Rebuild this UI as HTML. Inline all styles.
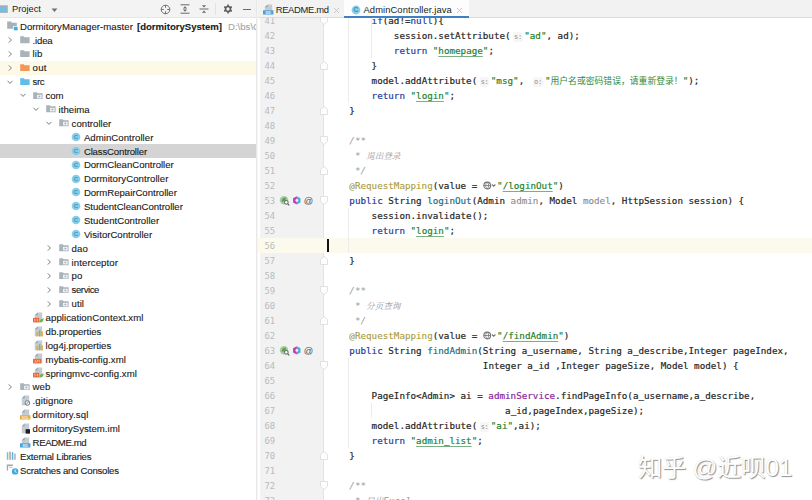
<!DOCTYPE html>
<html lang="zh"><head><meta charset="utf-8"><title>AdminController.java</title>
<style>
*{box-sizing:border-box}
html,body{margin:0;padding:0}
body{width:812px;height:500px;overflow:hidden;background:#fff;position:relative;font-family:"Liberation Sans","Noto Sans CJK SC",sans-serif;color:#1c1c1c}
#left{position:absolute;left:0;top:0;width:256px;height:500px;background:#fff;overflow:hidden}
#lhead{position:absolute;left:0;top:0;width:256px;height:18px;background:#f3f3f3;border-bottom:1px solid #e6e6e6}
#lhead .t{position:absolute;left:12px;top:0.8px;line-height:17.5px;font-size:9.3px;color:#1c1c1c}
.row{position:absolute;left:0;width:256px;height:13.875px;white-space:nowrap}
.row .lbl{position:absolute;top:0.7px;line-height:13.875px;font-size:9.6px;color:#1a1a1a;letter-spacing:0;-webkit-text-stroke:0.12px}
.row .bd{font-weight:bold}
.row .path{color:#a6a6a6}
.row .icw{position:absolute;top:0;height:13.875px;display:flex;align-items:center}
.row .ar{position:absolute;top:3px}
.ic{display:block}
#split{position:absolute;left:255.5px;top:0;width:4px;height:500px;background:#f6f6f6;border-left:1px solid #e8e8e8}
#ed{position:absolute;left:258px;top:0;width:554px;height:500px;background:#fff;overflow:hidden}
#gut{position:absolute;left:259.5px;top:18px;width:64px;height:482px;background:#f2f2f2;border-right:1px solid #e3e3e3}
#cur{position:absolute;left:258px;top:237.5px;width:554px;height:15px;background:#fcfaed}
#caret{position:absolute;left:327.2px;top:239px;width:1.7px;height:13.3px;background:#111}
#tabs{position:absolute;left:258px;top:0;width:554px;height:18px;background:#f2f2f2;border-bottom:1px solid #dcdcdc}
.tab{position:absolute;top:0;height:18px;line-height:17.5px;font-size:9.4px;color:#1c1c1c;white-space:nowrap}
.tl{position:absolute;top:1px}
.tx{position:absolute;top:6.5px}
.tab.act{background:#fdfdfd;border-bottom:2.2px solid #3f7fc4}
.ln{position:absolute;left:258px;width:17.2px;text-align:right;height:15.0px;line-height:15.0px;font-family:"DejaVu Sans Mono","Liberation Mono",monospace;font-size:8.9px;color:#bababa}
.cl{position:absolute;height:15.0px;line-height:15.0px;font-family:"DejaVu Sans Mono","Liberation Mono","Noto Sans CJK SC",monospace;font-size:9.240px;color:#242424;white-space:pre;-webkit-text-stroke:0.18px}
.k{color:#1b3a9f} .s{color:#1f7f2c} .u{text-decoration:underline;text-decoration-thickness:0.7px;text-underline-offset:1.5px;text-decoration-color:rgba(31,127,44,.6)} .m{color:#1a6c82} .a{color:#a89a3c;-webkit-text-stroke:0.1px} .f{color:#8a259a}
.c{color:#999;font-style:italic;-webkit-text-stroke:0} .p{color:#8a8a8a;-webkit-text-stroke:0.1px}
.cj{font-size:8.82px;-webkit-text-stroke:0;color:#2f8a3c}
.c.cj{color:#999;font-family:"Noto Serif CJK SC","Noto Sans CJK SC",serif;font-size:8.6px}
.h{-webkit-text-stroke:0;display:inline-block;font-family:"DejaVu Sans Mono","Liberation Mono",monospace;font-size:7px;color:#8c8c8c;background:#f6f6f6;border-radius:2px;padding:0;margin:0 1.5px 0 2.7px;line-height:10px;height:10px;width:9.4px;text-align:center;vertical-align:0.5px;letter-spacing:-0.3px}
.h2{margin-left:2.8px;width:10.9px}
.gl{display:inline-block;width:14.3px;height:9px;vertical-align:-1px}
.ig{position:absolute;width:1px;background:#ececec}
.fold{position:absolute;left:319.700px}
.gi{position:absolute;left:278.5px;height:11px;white-space:nowrap}
.gi svg{vertical-align:top}
.gi .at{position:absolute;left:25.3px;top:0.3px;font-size:9.3px;color:#4f4f4f;line-height:13px;font-family:"Liberation Sans",sans-serif}
#wm{position:absolute;left:638px;top:452px;font-size:24.3px;line-height:32px;color:#fff;white-space:nowrap;font-family:"Liberation Sans","Noto Sans CJK SC",sans-serif;text-shadow:1px 1px 0.9px rgba(60,60,60,.55),0 0 1px rgba(120,120,120,.3);letter-spacing:-0.2px}
</style></head><body>
<div id="left">
<div id="lhead">
<svg style="position:absolute;left:0;top:5px" width="9" height="9" viewBox="0 0 9 9"><rect x="-1" y="0.3" width="8.8" height="7.6" fill="#a3afb8"/><rect x="-1" y="2.6" width="7.6" height="4.4" fill="#6fc0e6"/></svg>
<svg style="position:absolute;left:51.4px;top:7.6px" width="8" height="5" viewBox="0 0 8 5"><path d="M0.6 0.5h5.8l-2.9 3.5z" fill="#6e6e6e"/></svg>
<svg style="position:absolute;left:160.2px;top:4px" width="11" height="11" viewBox="0 0 11 11"><circle cx="5.5" cy="5.5" r="4.3" fill="none" stroke="#6a6a6a" stroke-width="0.95"/><path d="M5.5 1.2v2.6M5.5 7.2v2.6M1.2 5.5h2.6M7.2 5.5h2.6" stroke="#6a6a6a" stroke-width="0.95"/></svg>
<svg style="position:absolute;left:179.6px;top:4.3px" width="10" height="10" viewBox="0 0 10 10"><path d="M0.5 0.8h9M0.5 9.2h9" stroke="#6a6a6a" stroke-width="1"/><path d="M5 2.3l2.100 2.2h-4.2zM5 7.7l2.100-2.2h-4.2z" fill="#6a6a6a"/></svg>
<svg style="position:absolute;left:198.7px;top:4.3px" width="10" height="10" viewBox="0 0 10 10"><path d="M0.5 5h9" stroke="#6a6a6a" stroke-width="1"/><path d="M5 3.6l2.100-2.4h-4.2zM5 6.4l2.100 2.4h-4.2z" fill="#6a6a6a"/></svg>
<div style="position:absolute;left:215.2px;top:3px;width:1px;height:12px;background:#e2e2e2"></div>
<svg style="position:absolute;left:222.9px;top:4.3px" width="10" height="10" viewBox="0 0 10 10"><circle cx="5" cy="5" r="2.5" fill="none" stroke="#5c5c5c" stroke-width="1.7"/><path d="M5 0.6v1.800M5 7.6v1.800M1.200 2.8l1.600 0.900M7.200 6.3l1.600 0.900M1.200 7.2l1.600-0.900M7.200 3.7l1.600-0.9" stroke="#5c5c5c" stroke-width="1.6"/></svg>
<div style="position:absolute;left:242.5px;top:8.9px;width:8.8px;height:1.2px;background:#6a6a6a"></div>
<span class="t">Project</span></div>
<div class="row" style="top:19.06px;"><span class="icw" style="left:7.0px"><svg class="ic" width="12" height="10" viewBox="0 0 12 10"><path d="M0.200 0.6h3.800l1 1.2h4.8v6H0.200z" fill="#a6b1b9"/><rect x="6.4" y="5.4" width="4.6" height="4.4" fill="#3fb0e2" stroke="#fff" stroke-width="0.7"/></svg></span><span class="lbl" style="left:20.0px;letter-spacing:0.040px">DormitoryManager-master</span><span class="lbl bd" style="left:137.0px;letter-spacing:-0.017px">[dormitorySystem]</span><span class="lbl path" style="left:228.0px;letter-spacing:0.000px">D:\bs\C</span></div>
<div class="row" style="top:32.94px;"><svg class="ar" style="left:5.8px" width="8" height="8" viewBox="0 0 8 8"><path d="M2.8 1.4l2.6 2.6-2.6 2.6" stroke="#7c7c7c" stroke-width="1" fill="none"/></svg><span class="icw" style="left:20.2px"><svg class="ic" width="9.8" height="7.5" viewBox="0 0 10 8" preserveAspectRatio="none"><path d="M0.2 0.2h3.6l1 1.2h5v6.4H0.2z" fill="#a9b3ba"/></svg></span><span class="lbl" style="left:32.6px;letter-spacing:-0.183px">.idea</span></div>
<div class="row" style="top:46.81px;"><svg class="ar" style="left:5.8px" width="8" height="8" viewBox="0 0 8 8"><path d="M2.8 1.4l2.6 2.6-2.6 2.6" stroke="#7c7c7c" stroke-width="1" fill="none"/></svg><span class="icw" style="left:20.2px"><svg class="ic" width="9.8" height="7.5" viewBox="0 0 10 8" preserveAspectRatio="none"><path d="M0.2 0.2h3.6l1 1.2h5v6.4H0.2z" fill="#a9b3ba"/></svg></span><span class="lbl" style="left:32.6px;letter-spacing:0.064px">lib</span></div>
<div class="row" style="top:60.69px;background:#fcf9e6;"><svg class="ar" style="left:5.8px" width="8" height="8" viewBox="0 0 8 8"><path d="M2.8 1.4l2.6 2.6-2.6 2.6" stroke="#7c7c7c" stroke-width="1" fill="none"/></svg><span class="icw" style="left:20.2px"><svg class="ic" width="9.8" height="7.5" viewBox="0 0 10 8" preserveAspectRatio="none"><path d="M0.2 0.2h3.6l1 1.2h5v6.4H0.2z" fill="#f2965a"/></svg></span><span class="lbl" style="left:32.6px;letter-spacing:0.285px">out</span></div>
<div class="row" style="top:74.56px;"><svg class="ar" style="left:5.8px" width="8" height="8" viewBox="0 0 8 8"><path d="M1.5 2.8l2.5 2.6 2.5-2.6" stroke="#7c7c7c" stroke-width="1" fill="none"/></svg><span class="icw" style="left:20.2px"><svg class="ic" width="9.8" height="7.5" viewBox="0 0 10 8" preserveAspectRatio="none"><path d="M0.2 0.2h3.6l1 1.2h5v6.4H0.2z" fill="#62bde6"/></svg></span><span class="lbl" style="left:32.6px;letter-spacing:-0.366px">src</span></div>
<div class="row" style="top:88.44px;"><svg class="ar" style="left:18.7px" width="8" height="8" viewBox="0 0 8 8"><path d="M1.5 2.8l2.5 2.6 2.5-2.6" stroke="#7c7c7c" stroke-width="1" fill="none"/></svg><span class="icw" style="left:33.2px"><svg class="ic" width="9.8" height="7.5" viewBox="0 0 10 8" preserveAspectRatio="none"><path d="M0.2 0.2h3.6l1 1.2h5v6.4H0.2z" fill="#a9b3ba"/><rect x="4.2" y="3" width="4.6" height="3.8" fill="#f4f6f7"/><circle cx="6.5" cy="4.9" r="1.05" fill="#a9b3ba"/></svg></span><span class="lbl" style="left:45.6px;letter-spacing:-0.075px">com</span></div>
<div class="row" style="top:102.31px;"><svg class="ar" style="left:31.6px" width="8" height="8" viewBox="0 0 8 8"><path d="M1.5 2.8l2.5 2.6 2.5-2.6" stroke="#7c7c7c" stroke-width="1" fill="none"/></svg><span class="icw" style="left:46.2px"><svg class="ic" width="9.8" height="7.5" viewBox="0 0 10 8" preserveAspectRatio="none"><path d="M0.2 0.2h3.6l1 1.2h5v6.4H0.2z" fill="#a9b3ba"/><rect x="4.2" y="3" width="4.6" height="3.8" fill="#f4f6f7"/><circle cx="6.5" cy="4.9" r="1.05" fill="#a9b3ba"/></svg></span><span class="lbl" style="left:58.6px;letter-spacing:0.023px">itheima</span></div>
<div class="row" style="top:116.19px;"><svg class="ar" style="left:44.5px" width="8" height="8" viewBox="0 0 8 8"><path d="M1.5 2.8l2.5 2.6 2.5-2.6" stroke="#7c7c7c" stroke-width="1" fill="none"/></svg><span class="icw" style="left:59.2px"><svg class="ic" width="9.8" height="7.5" viewBox="0 0 10 8" preserveAspectRatio="none"><path d="M0.2 0.2h3.6l1 1.2h5v6.4H0.2z" fill="#a9b3ba"/><rect x="4.2" y="3" width="4.6" height="3.8" fill="#f4f6f7"/><circle cx="6.5" cy="4.9" r="1.05" fill="#a9b3ba"/></svg></span><span class="lbl" style="left:71.6px;letter-spacing:0.023px">controller</span></div>
<div class="row" style="top:130.06px;"><span class="icw" style="left:71.2px"><svg class="ic" width="10" height="10" viewBox="0 0 10 10"><circle cx="5" cy="5" r="4.3" fill="#86cdea"/><text x="5" y="7.3" font-family="Liberation Sans, sans-serif" font-size="6.2" font-weight="bold" text-anchor="middle" fill="#4597bd">C</text></svg></span><span class="lbl" style="left:83.9px;letter-spacing:0.047px">AdminController</span></div>
<div class="row" style="top:143.94px;background:#d4d4d4;"><span class="icw" style="left:71.2px"><svg class="ic" width="10" height="10" viewBox="0 0 10 10"><circle cx="5" cy="5" r="4.3" fill="#86cdea"/><text x="5" y="7.3" font-family="Liberation Sans, sans-serif" font-size="6.2" font-weight="bold" text-anchor="middle" fill="#4597bd">C</text></svg></span><span class="lbl" style="left:83.9px;letter-spacing:-0.165px">ClassController</span></div>
<div class="row" style="top:157.81px;"><span class="icw" style="left:71.2px"><svg class="ic" width="10" height="10" viewBox="0 0 10 10"><circle cx="5" cy="5" r="4.3" fill="#86cdea"/><text x="5" y="7.3" font-family="Liberation Sans, sans-serif" font-size="6.2" font-weight="bold" text-anchor="middle" fill="#4597bd">C</text></svg></span><span class="lbl" style="left:83.9px;letter-spacing:-0.016px">DormCleanController</span></div>
<div class="row" style="top:171.69px;"><span class="icw" style="left:71.2px"><svg class="ic" width="10" height="10" viewBox="0 0 10 10"><circle cx="5" cy="5" r="4.3" fill="#86cdea"/><text x="5" y="7.3" font-family="Liberation Sans, sans-serif" font-size="6.2" font-weight="bold" text-anchor="middle" fill="#4597bd">C</text></svg></span><span class="lbl" style="left:83.9px;letter-spacing:0.075px">DormitoryController</span></div>
<div class="row" style="top:185.56px;"><span class="icw" style="left:71.2px"><svg class="ic" width="10" height="10" viewBox="0 0 10 10"><circle cx="5" cy="5" r="4.3" fill="#86cdea"/><text x="5" y="7.3" font-family="Liberation Sans, sans-serif" font-size="6.2" font-weight="bold" text-anchor="middle" fill="#4597bd">C</text></svg></span><span class="lbl" style="left:83.9px;letter-spacing:-0.016px">DormRepairController</span></div>
<div class="row" style="top:199.44px;"><span class="icw" style="left:71.2px"><svg class="ic" width="10" height="10" viewBox="0 0 10 10"><circle cx="5" cy="5" r="4.3" fill="#86cdea"/><text x="5" y="7.3" font-family="Liberation Sans, sans-serif" font-size="6.2" font-weight="bold" text-anchor="middle" fill="#4597bd">C</text></svg></span><span class="lbl" style="left:83.9px;letter-spacing:-0.038px">StudentCleanController</span></div>
<div class="row" style="top:213.31px;"><span class="icw" style="left:71.2px"><svg class="ic" width="10" height="10" viewBox="0 0 10 10"><circle cx="5" cy="5" r="4.3" fill="#86cdea"/><text x="5" y="7.3" font-family="Liberation Sans, sans-serif" font-size="6.2" font-weight="bold" text-anchor="middle" fill="#4597bd">C</text></svg></span><span class="lbl" style="left:83.9px;letter-spacing:0.037px">StudentController</span></div>
<div class="row" style="top:227.19px;"><span class="icw" style="left:71.2px"><svg class="ic" width="10" height="10" viewBox="0 0 10 10"><circle cx="5" cy="5" r="4.3" fill="#86cdea"/><text x="5" y="7.3" font-family="Liberation Sans, sans-serif" font-size="6.2" font-weight="bold" text-anchor="middle" fill="#4597bd">C</text></svg></span><span class="lbl" style="left:83.9px;letter-spacing:0.007px">VisitorController</span></div>
<div class="row" style="top:241.06px;"><svg class="ar" style="left:44.5px" width="8" height="8" viewBox="0 0 8 8"><path d="M2.8 1.4l2.6 2.6-2.6 2.6" stroke="#7c7c7c" stroke-width="1" fill="none"/></svg><span class="icw" style="left:59.2px"><svg class="ic" width="9.8" height="7.5" viewBox="0 0 10 8" preserveAspectRatio="none"><path d="M0.2 0.2h3.6l1 1.2h5v6.4H0.2z" fill="#a9b3ba"/><rect x="4.2" y="3" width="4.6" height="3.8" fill="#f4f6f7"/><circle cx="6.5" cy="4.9" r="1.05" fill="#a9b3ba"/></svg></span><span class="lbl" style="left:71.6px;letter-spacing:0.128px">dao</span></div>
<div class="row" style="top:254.94px;"><svg class="ar" style="left:44.5px" width="8" height="8" viewBox="0 0 8 8"><path d="M2.8 1.4l2.6 2.6-2.6 2.6" stroke="#7c7c7c" stroke-width="1" fill="none"/></svg><span class="icw" style="left:59.2px"><svg class="ic" width="9.8" height="7.5" viewBox="0 0 10 8" preserveAspectRatio="none"><path d="M0.2 0.2h3.6l1 1.2h5v6.4H0.2z" fill="#a9b3ba"/><rect x="4.2" y="3" width="4.6" height="3.8" fill="#f4f6f7"/><circle cx="6.5" cy="4.9" r="1.05" fill="#a9b3ba"/></svg></span><span class="lbl" style="left:71.6px;letter-spacing:0.097px">interceptor</span></div>
<div class="row" style="top:268.81px;"><svg class="ar" style="left:44.5px" width="8" height="8" viewBox="0 0 8 8"><path d="M2.8 1.4l2.6 2.6-2.6 2.6" stroke="#7c7c7c" stroke-width="1" fill="none"/></svg><span class="icw" style="left:59.2px"><svg class="ic" width="9.8" height="7.5" viewBox="0 0 10 8" preserveAspectRatio="none"><path d="M0.2 0.2h3.6l1 1.2h5v6.4H0.2z" fill="#a9b3ba"/><rect x="4.2" y="3" width="4.6" height="3.8" fill="#f4f6f7"/><circle cx="6.5" cy="4.9" r="1.05" fill="#a9b3ba"/></svg></span><span class="lbl" style="left:71.6px;letter-spacing:0.114px">po</span></div>
<div class="row" style="top:282.69px;"><svg class="ar" style="left:44.5px" width="8" height="8" viewBox="0 0 8 8"><path d="M2.8 1.4l2.6 2.6-2.6 2.6" stroke="#7c7c7c" stroke-width="1" fill="none"/></svg><span class="icw" style="left:59.2px"><svg class="ic" width="9.8" height="7.5" viewBox="0 0 10 8" preserveAspectRatio="none"><path d="M0.2 0.2h3.6l1 1.2h5v6.4H0.2z" fill="#a9b3ba"/><rect x="4.2" y="3" width="4.6" height="3.8" fill="#f4f6f7"/><circle cx="6.5" cy="4.9" r="1.05" fill="#a9b3ba"/></svg></span><span class="lbl" style="left:71.6px;letter-spacing:-0.427px">service</span></div>
<div class="row" style="top:296.56px;"><svg class="ar" style="left:44.5px" width="8" height="8" viewBox="0 0 8 8"><path d="M2.8 1.4l2.6 2.6-2.6 2.6" stroke="#7c7c7c" stroke-width="1" fill="none"/></svg><span class="icw" style="left:59.2px"><svg class="ic" width="9.8" height="7.5" viewBox="0 0 10 8" preserveAspectRatio="none"><path d="M0.2 0.2h3.6l1 1.2h5v6.4H0.2z" fill="#a9b3ba"/><rect x="4.2" y="3" width="4.6" height="3.8" fill="#f4f6f7"/><circle cx="6.5" cy="4.9" r="1.05" fill="#a9b3ba"/></svg></span><span class="lbl" style="left:71.6px;letter-spacing:0.034px">util</span></div>
<div class="row" style="top:310.44px;"><span class="icw" style="left:33.2px"><svg class="ic" width="11" height="11" viewBox="0 0 11 11"><path d="M4.6 0.4h4.6v9.8H1.8V3.2z" fill="#c3ccd3"/><path d="M4.6 0.4v2.8H1.8z" fill="#96a3ac"/><rect x="0" y="5.8" width="6.2" height="4.6" fill="#e86a35"/><path d="M1.200 7l1.200 1.1-1.200 1.1M5 7l-1.200 1.100 1.200 1.1" stroke="#fbe3d6" stroke-width="0.7" fill="none"/><path d="M6.400 10.4c0-2.600 1.6-4 4.3-4 0 2.7-1.600 4.2-4.300 4z" fill="#6fb558"/></svg></span><span class="lbl" style="left:45.6px;letter-spacing:0.062px">applicationContext.xml</span></div>
<div class="row" style="top:324.31px;"><span class="icw" style="left:33.2px"><svg class="ic" width="11" height="11" viewBox="0 0 11 11"><path d="M4.6 0.4h4.6v9.8H1.8V3.2z" fill="#c3ccd3"/><path d="M4.6 0.4v2.8H1.8z" fill="#96a3ac"/><rect x="3.4" y="6" width="1.7" height="4.4" fill="#e9a83c"/><rect x="5.8" y="4.2" width="1.7" height="6.2" fill="#8fb26c"/><rect x="8.2" y="5.4" width="1.7" height="5" fill="#e9a83c"/></svg></span><span class="lbl" style="left:45.6px;letter-spacing:-0.015px">db.properties</span></div>
<div class="row" style="top:338.19px;"><span class="icw" style="left:33.2px"><svg class="ic" width="11" height="11" viewBox="0 0 11 11"><path d="M4.6 0.4h4.6v9.8H1.8V3.2z" fill="#c3ccd3"/><path d="M4.6 0.4v2.8H1.8z" fill="#96a3ac"/><rect x="3.4" y="6" width="1.7" height="4.4" fill="#e9a83c"/><rect x="5.8" y="4.2" width="1.7" height="6.2" fill="#8fb26c"/><rect x="8.2" y="5.4" width="1.7" height="5" fill="#e9a83c"/></svg></span><span class="lbl" style="left:45.6px;letter-spacing:-0.001px">log4j.properties</span></div>
<div class="row" style="top:352.06px;"><span class="icw" style="left:33.2px"><svg class="ic" width="11" height="11" viewBox="0 0 11 11"><path d="M4.6 0.4h4.6v9.8H1.8V3.2z" fill="#c3ccd3"/><path d="M4.6 0.4v2.8H1.8z" fill="#96a3ac"/><rect x="0" y="5.8" width="8.4" height="4.6" fill="#e86a35"/><path d="M1.600 7l1.200 1.1-1.200 1.1M6.800 7l-1.200 1.100 1.200 1.1M4.700 6.8l-1 2.8" stroke="#fbe3d6" stroke-width="0.7" fill="none"/></svg></span><span class="lbl" style="left:45.6px;letter-spacing:0.048px">mybatis-config.xml</span></div>
<div class="row" style="top:365.94px;"><span class="icw" style="left:33.2px"><svg class="ic" width="11" height="11" viewBox="0 0 11 11"><path d="M4.6 0.4h4.6v9.8H1.8V3.2z" fill="#c3ccd3"/><path d="M4.6 0.4v2.8H1.8z" fill="#96a3ac"/><rect x="0" y="5.8" width="6.2" height="4.6" fill="#e86a35"/><path d="M1.200 7l1.200 1.1-1.200 1.1M5 7l-1.200 1.100 1.200 1.1" stroke="#fbe3d6" stroke-width="0.7" fill="none"/><path d="M6.400 10.4c0-2.600 1.6-4 4.3-4 0 2.7-1.600 4.2-4.300 4z" fill="#6fb558"/></svg></span><span class="lbl" style="left:45.6px;letter-spacing:0.065px">springmvc-config.xml</span></div>
<div class="row" style="top:379.81px;"><svg class="ar" style="left:5.8px" width="8" height="8" viewBox="0 0 8 8"><path d="M2.8 1.4l2.6 2.6-2.6 2.6" stroke="#7c7c7c" stroke-width="1" fill="none"/></svg><span class="icw" style="left:20.2px"><svg class="ic" width="9.8" height="7.5" viewBox="0 0 10 8" preserveAspectRatio="none"><path d="M0.2 0.2h3.6l1 1.2h5v6.4H0.2z" fill="#a9b3ba"/><rect x="4.2" y="3" width="4.6" height="3.8" fill="#f4f6f7"/><circle cx="6.5" cy="4.9" r="1.05" fill="#a9b3ba"/></svg></span><span class="lbl" style="left:32.6px;letter-spacing:0.064px">web</span></div>
<div class="row" style="top:393.69px;"><span class="icw" style="left:20.2px"><svg class="ic" width="11" height="11" viewBox="0 0 11 11"><path d="M4.6 0.4h4.6v9.8H1.8V3.2z" fill="#c3ccd3"/><path d="M4.6 0.4v2.8H1.8z" fill="#96a3ac"/><circle cx="7.4" cy="8" r="2.3" fill="#f2f4f5" stroke="#5a6870" stroke-width="0.8"/><path d="M5.800 9.6l3.200-3.2" stroke="#5a6870" stroke-width="0.7"/></svg></span><span class="lbl" style="left:32.6px;letter-spacing:0.093px">.gitignore</span></div>
<div class="row" style="top:407.56px;"><span class="icw" style="left:20.2px"><svg class="ic" width="11" height="11" viewBox="0 0 11 11"><path d="M4.6 0.4h4.6v9.8H1.8V3.2z" fill="#c3ccd3"/><path d="M4.6 0.4v2.8H1.8z" fill="#96a3ac"/><rect x="0" y="6.3" width="10.4" height="4.2" fill="#e9a83c"/><text x="5.2" y="9.8" font-family="Liberation Sans, sans-serif" font-size="3.6" font-weight="bold" text-anchor="middle" fill="#fff" fill-opacity="0.85">SQL</text></svg></span><span class="lbl" style="left:32.6px;letter-spacing:0.131px">dormitory.sql</span></div>
<div class="row" style="top:421.44px;"><span class="icw" style="left:20.2px"><svg class="ic" width="11" height="11" viewBox="0 0 11 11"><path d="M4.6 0.4h4.6v9.8H1.8V3.2z" fill="#c3ccd3"/><path d="M4.6 0.4v2.8H1.8z" fill="#96a3ac"/><rect x="5.6" y="6.2" width="4.4" height="4.4" fill="#1f1f1f"/></svg></span><span class="lbl" style="left:32.6px;letter-spacing:0.016px">dormitorySystem.iml</span></div>
<div class="row" style="top:435.31px;"><span class="icw" style="left:20.2px"><svg class="ic" width="11" height="11" viewBox="0 0 11 11"><path d="M4.6 0.4h4.6v9.8H1.8V3.2z" fill="#c3ccd3"/><path d="M4.6 0.4v2.8H1.8z" fill="#96a3ac"/><rect x="0" y="6.3" width="10.4" height="4.2" fill="#4f9fd8"/><text x="5.2" y="9.8" font-family="Liberation Sans, sans-serif" font-size="3.6" font-weight="bold" text-anchor="middle" fill="#fff" fill-opacity="0.85">MD</text></svg></span><span class="lbl" style="left:32.6px;letter-spacing:-0.372px">README.md</span></div>
<div class="row" style="top:449.19px;"><span class="icw" style="left:5.0px"><svg class="ic" width="12" height="10" viewBox="0 0 12 10"><rect x="1.8" y="1.2" width="1.5" height="7.6" fill="#9fb3a6"/><rect x="4.3" y="0.6" width="1.5" height="8.2" fill="#9aa7b0"/><rect x="6.8" y="1.2" width="1.5" height="7.6" fill="#5fb0dd"/><rect x="9.3" y="2.6" width="1.3" height="6.2" fill="#9aa7b0"/></svg></span><span class="lbl" style="left:20.0px;letter-spacing:-0.181px">External Libraries</span></div>
<div class="row" style="top:463.06px;"><span class="icw" style="left:5.0px"><svg class="ic" width="14" height="11" viewBox="0 0 14 11"><path d="M1.800 0.6h6v1.3H3.1v4.6H1.800z" fill="#9aa7b0"/><path d="M4 2.8h3.6v1h-3.600z" fill="#b7c0c7"/><circle cx="10.1" cy="7.4" r="3.2" fill="#43a8dc"/><path d="M10.100 5.5v2.1l1.400 0.8" stroke="#fff" stroke-width="0.9" fill="none"/></svg></span><span class="lbl" style="left:20.0px;letter-spacing:-0.241px">Scratches and Consoles</span></div>
</div>
<div id="split"></div>
<div id="ed"></div>
<div id="gut"></div>
<div id="cur"></div>
<div class="ln" style="top:13.6px">41</div>
<div class="cl" style="top:13.0px;left:371.60px"><span class="k">if</span>(ad!=<span class="k">null</span>){</div>
<div class="ln" style="top:28.6px">42</div>
<div class="cl" style="top:28.0px;left:393.86px">session.setAttribute(<span class="h">s:</span><span class="s">"ad"</span>, ad);</div>
<div class="ln" style="top:43.6px">43</div>
<div class="cl" style="top:43.0px;left:393.86px"><span class="k">return</span> <span class="s">"</span><span class="s u">homepage</span><span class="s">"</span>;</div>
<div class="ln" style="top:58.6px">44</div>
<div class="cl" style="top:58.0px;left:371.60px">}</div>
<div class="ln" style="top:73.6px">45</div>
<div class="cl" style="top:73.0px;left:371.60px">model.addAttribute(<span class="h">s:</span><span class="s">"msg"</span>, <span class="h h2">o:</span><span class="s">"</span><span class="s cj">用户名或密码错误，请重新登录！</span><span class="s">"</span>);</div>
<div class="ln" style="top:88.6px">46</div>
<div class="cl" style="top:88.0px;left:371.60px"><span class="k">return</span> <span class="s">"</span><span class="s u">login</span><span class="s">"</span>;</div>
<div class="ln" style="top:103.6px">47</div>
<div class="cl" style="top:103.0px;left:349.35px">}</div>
<div class="ln" style="top:118.6px">48</div>
<div class="ln" style="top:133.6px">49</div>
<div class="cl" style="top:133.0px;left:349.35px"><span class="c">/**</span></div>
<div class="ln" style="top:148.6px">50</div>
<div class="cl" style="top:148.0px;left:349.35px"><span class="c"> * </span><span class="c cj">退出登录</span></div>
<div class="ln" style="top:163.6px">51</div>
<div class="cl" style="top:163.0px;left:349.35px"><span class="c"> */</span></div>
<div class="ln" style="top:178.6px">52</div>
<div class="cl" style="top:178.0px;left:349.35px"><span class="a">@RequestMapping</span>(value = <span class="gl"><svg width="14" height="9" viewBox="0 0 14 9"><circle cx="4.2" cy="4.5" r="3.4" fill="none" stroke="#727272" stroke-width="1.1"/><path d="M1 4.5h6.4M4.2 1.2c-2 2-2 4.600 0 6.600M4.200 1.200c2 2 2 4.600 0 6.600" stroke="#727272" stroke-width="0.8" fill="none"/><path d="M9 3.500l1.700 1.800 1.700-1.800" stroke="#727272" stroke-width="1.100" fill="none"/></svg></span><span class="s">"</span><span class="s u">/loginOut</span><span class="s">"</span>)</div>
<div class="ln" style="top:193.6px">53</div>
<div class="cl" style="top:193.0px;left:349.35px"><span class="k">public</span> String <span class="m">loginOut</span>(Admin <span class="p">admin</span>, Model <span class="p">model</span>, HttpSession session) {</div>
<div class="ln" style="top:208.6px">54</div>
<div class="cl" style="top:208.0px;left:371.60px">session.invalidate();</div>
<div class="ln" style="top:223.6px">55</div>
<div class="cl" style="top:223.0px;left:371.60px"><span class="k">return</span> <span class="s">"</span><span class="s u">login</span><span class="s">"</span>;</div>
<div class="ln" style="top:238.6px">56</div>
<div class="ln" style="top:253.6px">57</div>
<div class="cl" style="top:253.0px;left:349.35px">}</div>
<div class="ln" style="top:268.6px">58</div>
<div class="ln" style="top:283.6px">59</div>
<div class="cl" style="top:283.0px;left:349.35px"><span class="c">/**</span></div>
<div class="ln" style="top:298.6px">60</div>
<div class="cl" style="top:298.0px;left:349.35px"><span class="c"> * </span><span class="c cj">分页查询</span></div>
<div class="ln" style="top:313.6px">61</div>
<div class="cl" style="top:313.0px;left:349.35px"><span class="c"> */</span></div>
<div class="ln" style="top:328.6px">62</div>
<div class="cl" style="top:328.0px;left:349.35px"><span class="a">@RequestMapping</span>(value = <span class="gl"><svg width="14" height="9" viewBox="0 0 14 9"><circle cx="4.2" cy="4.5" r="3.4" fill="none" stroke="#727272" stroke-width="1.1"/><path d="M1 4.5h6.4M4.2 1.2c-2 2-2 4.600 0 6.600M4.200 1.200c2 2 2 4.600 0 6.600" stroke="#727272" stroke-width="0.8" fill="none"/><path d="M9 3.500l1.700 1.800 1.700-1.800" stroke="#727272" stroke-width="1.100" fill="none"/></svg></span><span class="s">"</span><span class="s u">/findAdmin</span><span class="s">"</span>)</div>
<div class="ln" style="top:343.6px">63</div>
<div class="cl" style="top:343.0px;left:349.35px"><span class="k">public</span> String <span class="m">findAdmin</span>(String a_username, String a_describe,Integer pageIndex,</div>
<div class="ln" style="top:358.6px">64</div>
<div class="cl" style="top:358.0px;left:482.86px">Integer a_id ,Integer pageSize, Model model) {</div>
<div class="ln" style="top:373.6px">65</div>
<div class="ln" style="top:388.6px">66</div>
<div class="cl" style="top:388.0px;left:371.60px">PageInfo&lt;Admin&gt; ai = <span class="f">adminService</span>.findPageInfo(a_username,a_describe,</div>
<div class="ln" style="top:403.6px">67</div>
<div class="cl" style="top:403.0px;left:505.12px">a_id,pageIndex,pageSize);</div>
<div class="ln" style="top:418.6px">68</div>
<div class="cl" style="top:418.0px;left:371.60px">model.addAttribute(<span class="h">s:</span><span class="s">"ai"</span>,ai);</div>
<div class="ln" style="top:433.6px">69</div>
<div class="cl" style="top:433.0px;left:371.60px"><span class="k">return</span> <span class="s">"</span><span class="s u">admin_list</span><span class="s">"</span>;</div>
<div class="ln" style="top:448.6px">70</div>
<div class="cl" style="top:448.0px;left:349.35px">}</div>
<div class="ln" style="top:463.6px">71</div>
<div class="ln" style="top:478.6px">72</div>
<div class="cl" style="top:478.0px;left:349.35px"><span class="c">/**</span></div>
<div class="ln" style="top:493.6px">73</div>
<div class="cl" style="top:493.0px;left:349.35px"><span class="c"> * </span><span class="c cj">导出</span><span class="c">Excel</span></div>
<svg class="fold" style="top:15.5px" width="8" height="9" viewBox="0 0 8 9"><path d="M0.5 0.5h7v5l-3.5 3-3.5-3z" fill="#fdfdfd" stroke="#dadada" stroke-width="0.8"/></svg>
<svg class="fold" style="top:60.5px" width="8" height="9" viewBox="0 0 8 9"><path d="M0.5 8.5h7v-5l-3.5-3-3.5 3z" fill="#fdfdfd" stroke="#dadada" stroke-width="0.8"/></svg>
<svg class="fold" style="top:105.5px" width="8" height="9" viewBox="0 0 8 9"><path d="M0.5 8.5h7v-5l-3.5-3-3.5 3z" fill="#fdfdfd" stroke="#dadada" stroke-width="0.8"/></svg>
<svg class="fold" style="top:135.5px" width="8" height="9" viewBox="0 0 8 9"><path d="M0.5 0.5h7v5l-3.5 3-3.5-3z" fill="#fdfdfd" stroke="#dadada" stroke-width="0.8"/></svg>
<svg class="fold" style="top:165.5px" width="8" height="9" viewBox="0 0 8 9"><path d="M0.5 8.5h7v-5l-3.5-3-3.5 3z" fill="#fdfdfd" stroke="#dadada" stroke-width="0.8"/></svg>
<svg class="fold" style="top:195.5px" width="8" height="9" viewBox="0 0 8 9"><path d="M0.5 0.5h7v5l-3.5 3-3.5-3z" fill="#fdfdfd" stroke="#dadada" stroke-width="0.8"/></svg>
<svg class="fold" style="top:255.5px" width="8" height="9" viewBox="0 0 8 9"><path d="M0.5 8.5h7v-5l-3.5-3-3.5 3z" fill="#fdfdfd" stroke="#dadada" stroke-width="0.8"/></svg>
<svg class="fold" style="top:285.5px" width="8" height="9" viewBox="0 0 8 9"><path d="M0.5 0.5h7v5l-3.5 3-3.5-3z" fill="#fdfdfd" stroke="#dadada" stroke-width="0.8"/></svg>
<svg class="fold" style="top:315.5px" width="8" height="9" viewBox="0 0 8 9"><path d="M0.5 8.5h7v-5l-3.5-3-3.5 3z" fill="#fdfdfd" stroke="#dadada" stroke-width="0.8"/></svg>
<svg class="fold" style="top:360.5px" width="8" height="9" viewBox="0 0 8 9"><path d="M0.5 0.5h7v5l-3.5 3-3.5-3z" fill="#fdfdfd" stroke="#dadada" stroke-width="0.8"/></svg>
<svg class="fold" style="top:450.5px" width="8" height="9" viewBox="0 0 8 9"><path d="M0.5 8.5h7v-5l-3.5-3-3.5 3z" fill="#fdfdfd" stroke="#dadada" stroke-width="0.8"/></svg>
<svg class="fold" style="top:480.5px" width="8" height="9" viewBox="0 0 8 9"><path d="M0.5 0.5h7v5l-3.5 3-3.5-3z" fill="#fdfdfd" stroke="#dadada" stroke-width="0.8"/></svg>
<div class="gi" style="top:194.5px">
<svg width="24" height="11" viewBox="0 0 24 11">
<circle cx="5" cy="5.2" r="4.2" fill="#a9cc9f"/><path d="M2.6 6.6c0-2.6 1.6-4 4.4-4 0 2.800-1.600 4.300-4.400 4z" fill="#5f9d55"/><circle cx="7.300" cy="7.300" r="1.900" fill="#f4f4f4" stroke="#4d5a5e" stroke-width="0.900"/><path d="M8.600 8.700l1.600 1.700" stroke="#4d5a5e" stroke-width="1.100"/>
<path d="M17.800 1.200l3.700 2.100v4.200l-3.700 2.100z" fill="#3fb4e0"/><path d="M17.800 1.200l-3.700 2.100v4.200l3.700 2.100z" fill="#c23bb0"/><circle cx="17.800" cy="5.400" r="1.300" fill="#fff"/>
</svg><span class="at">@</span></div>
<div class="gi" style="top:344.5px">
<svg width="24" height="11" viewBox="0 0 24 11">
<circle cx="5" cy="5.2" r="4.2" fill="#a9cc9f"/><path d="M2.6 6.6c0-2.6 1.6-4 4.4-4 0 2.800-1.600 4.300-4.400 4z" fill="#5f9d55"/><circle cx="7.300" cy="7.300" r="1.900" fill="#f4f4f4" stroke="#4d5a5e" stroke-width="0.900"/><path d="M8.600 8.700l1.600 1.700" stroke="#4d5a5e" stroke-width="1.100"/>
<path d="M17.800 1.200l3.700 2.100v4.200l-3.700 2.100z" fill="#3fb4e0"/><path d="M17.800 1.200l-3.700 2.100v4.200l3.700 2.100z" fill="#c23bb0"/><circle cx="17.800" cy="5.400" r="1.300" fill="#fff"/>
</svg><span class="at">@</span></div>
<div id="caret"></div>
<div class="ig" style="left:348.2px;top:18px;height:84.5px"></div>
<div class="ig" style="left:348.2px;top:207.5px;height:45.0px"></div>
<div class="ig" style="left:348.2px;top:357.5px;height:90.0px"></div>
<div class="ig" style="left:370.5px;top:18px;height:39.5px"></div>
<div class="ig" style="left:370.8px;top:402.5px;height:15.0px"></div>
<div id="tabs"><div class="tab" style="left:0;width:86.2px"><span style="position:absolute;left:4.9px;top:4.2px"><svg class="ic" width="11" height="11" viewBox="0 0 11 11"><path d="M4.6 0.4h4.6v9.8H1.8V3.2z" fill="#c3ccd3"/><path d="M4.6 0.4v2.8H1.8z" fill="#96a3ac"/><rect x="0" y="6.3" width="10.4" height="4.2" fill="#4f9fd8"/><text x="5.2" y="9.8" font-family="Liberation Sans, sans-serif" font-size="3.6" font-weight="bold" text-anchor="middle" fill="#fff" fill-opacity="0.85">MD</text></svg></span><span class="tl" style="left:17.7px;letter-spacing:-0.294px">README.md</span><svg class="tx" style="left:75.39999999999998px" width="7" height="7" viewBox="0 0 7 7"><path d="M1 1l5 5M6 1l-5 5" stroke="#c4c4c4" stroke-width="0.9" fill="none"/></svg></div><div class="tab act" style="left:86.2px;width:124.7px"><svg style="position:absolute;left:6.4px;top:4.8px" width="10" height="10" viewBox="0 0 10 10"><circle cx="5" cy="5" r="4.4" fill="#86cdea"/><text x="5" y="7.3" font-family="Liberation Sans, sans-serif" font-size="6.6" font-weight="bold" text-anchor="middle" fill="#3a8fb5">C</text></svg><span class="tl" style="left:19.3px;letter-spacing:0.090px">AdminController.java</span><svg class="tx" style="left:112.0px" width="7" height="7" viewBox="0 0 7 7"><path d="M1 1l5 5M6 1l-5 5" stroke="#c4c4c4" stroke-width="0.9" fill="none"/></svg></div></div>
<div id="wm">知乎 @近呗01</div>
</body></html>
